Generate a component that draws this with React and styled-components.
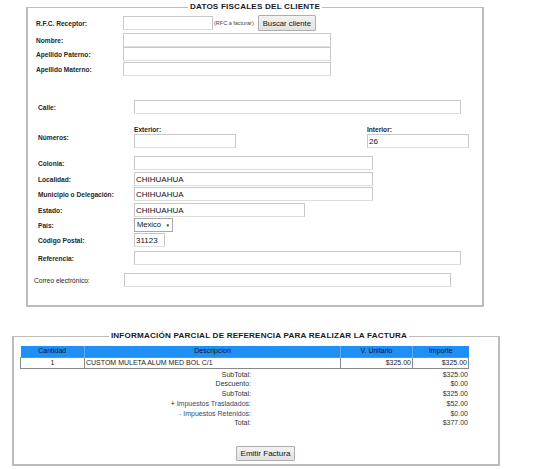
import React from "react";
import styled, { createGlobalStyle } from "styled-components";

const GlobalStyle = createGlobalStyle`
  html, body {
    margin: 0;
    padding: 0;
    background: #ffffff;
  }
  body {
    font-family: "Liberation Sans", Arial, sans-serif;
    color: #222;
  }
  * {
    box-sizing: border-box;
  }
`;

const Page = styled.div`
  padding-top: 1px;
  width: 545px;
`;

const Fieldset = styled.fieldset`
  margin: ${(p) => p.$mt || 0}px 0 0 ${(p) => p.$ml}px;
  width: ${(p) => p.$w}px;
  border: 2px solid #bcbcbc;
  border-top-width: 1px;
  padding: 0 0 ${(p) => p.$pb}px ${(p) => p.$pl || 0}px;
  min-width: 0;
`;

const Legend = styled.legend`
  margin: 0 auto;
  padding: 0 2px;
  font-size: 8.1px;
  line-height: 12px;
  font-weight: bold;
  letter-spacing: 0.2px;
  color: #1a1a1a;
`;

const Row = styled.div`
  display: flex;
  align-items: center;
  margin-top: ${(p) => p.$mt || 0}px;
  padding-left: ${(p) => p.$indent}px;
`;

const Label = styled.label`
  flex: none;
  width: ${(p) => p.$w}px;
  font-size: 6.6px;
  font-weight: ${(p) => (p.$light ? "normal" : "bold")};
  color: #262626;
  white-space: nowrap;
`;

const Input = styled.input`
  display: block;
  width: ${(p) => p.$w}px;
  height: 14px;
  margin: 0;
  padding: 0 1px;
  border: 1px solid #c8c8c8;
  border-bottom-color: #dedede;
  font-family: "Liberation Sans", Arial, sans-serif;
  font-size: 8px;
  color: #111;
  background: #fff;
  outline: none;
`;

const Hint = styled.span`
  margin-left: 1px;
  font-size: 5.5px;
  color: #444;
  white-space: nowrap;
`;

const Button = styled.button`
  height: ${(p) => p.$h || 16}px;
  margin-left: ${(p) => p.$ml || 0}px;
  padding: 0 4px;
  border: 1px solid #adadad;
  border-radius: 1px;
  background: linear-gradient(#f2f2f2, #e2e2e2);
  font-family: "Liberation Sans", Arial, sans-serif;
  font-size: ${(p) => p.$fs || 7.7}px;
  color: #111;
  cursor: pointer;
`;

const NumGroup = styled.div`
  display: flex;
  justify-content: space-between;
  width: 335px;
`;

const NumCol = styled.div`
  display: flex;
  flex-direction: column;
`;

const SubLabel = styled.span`
  font-size: 6.6px;
  line-height: 8px;
  font-weight: bold;
  color: #262626;
`;

const SelectWrap = styled.div`
  position: relative;
  flex: none;
  width: 39px;
  height: 14px;
`;

const Select = styled.select`
  display: block;
  appearance: none;
  -webkit-appearance: none;
  width: 39px;
  height: 14px;
  margin: 0;
  padding: 0 0 0 2px;
  border: 1px solid #a9a9a9;
  border-radius: 0;
  background: #fff;
  font-family: "Liberation Sans", Arial, sans-serif;
  font-size: 7.6px;
  line-height: 12px;
  color: #111;
`;

const Arrow = styled.span`
  position: absolute;
  right: 3px;
  top: 0;
  height: 14px;
  display: flex;
  align-items: center;
  font-size: 4.5px;
  color: #222;
  pointer-events: none;
`;

const Table = styled.table`
  margin: 4px 0 0 0;
  width: 448px;
  border-collapse: collapse;
  table-layout: fixed;
  font-size: 7px;
`;

const Th = styled.th`
  height: 11px;
  padding: 0;
  background: #1e8ff5;
  border-left: 1px solid #63b0fa;
  font-weight: normal;
  color: #141414;
  line-height: 10px;
  &:first-child {
    border-left: none;
  }
`;

const Td = styled.td`
  height: 11px;
  padding: 0 1px;
  border: 1px solid #8a8a8a;
  line-height: 9px;
  color: #1b1b1b;
  text-align: ${(p) => p.$align || "left"};
  white-space: nowrap;
  overflow: hidden;
`;

const Totals = styled.div`
  display: grid;
  grid-template-columns: 231px 217px;
  width: 448px;
  margin-top: 1px;
  font-size: 7px;
  line-height: 9.8px;
`;

const TotalLabel = styled.div`
  text-align: right;
  color: ${(p) => (p.$tax ? "#34486e" : "#333")};
`;

const TotalValue = styled.div`
  text-align: right;
  color: #333;
`;

const Sign = styled.span`
  color: ${(p) => (p.$minus ? "#6a8ab8" : "#111")};
`;

const ButtonRow = styled.div`
  display: flex;
  justify-content: center;
  margin-top: 18px;
  padding-left: 13px;
`;

const totals = [
  { label: "SubTotal:", value: "$325.00" },
  { label: "Descuento:", value: "$0.00" },
  { label: "SubTotal:", value: "$325.00" },
  { label: "Impuestos Trasladados:", value: "$52.00", sign: "+ " },
  { label: "Impuestos Retenidos:", value: "$0.00", sign: "- ", minus: true },
  { label: "Total:", value: "$377.00" },
];

export default function App() {
  return (
    <Page>
      <GlobalStyle />

      {/* datos fiscales */}
      <Fieldset $ml={26} $w={458} $pb={18}>
        <Legend>DATOS FISCALES DEL CLIENTE</Legend>

        <Row $indent={8} $mt={2}>
          <Label $w={87}>R.F.C. Receptor:</Label>
          <Input $w={90} />
          <Hint>(RFC a facturar)</Hint>
          <Button $ml={4}>Buscar cliente</Button>
        </Row>
        <Row $indent={8} $mt={2}>
          <Label $w={87}>Nombre:</Label>
          <Input $w={208} />
        </Row>
        <Row $indent={8}>
          <Label $w={87}>Apellido Paterno:</Label>
          <Input $w={208} />
        </Row>
        <Row $indent={8} $mt={1}>
          <Label $w={87}>Apellido Materno:</Label>
          <Input $w={208} />
        </Row>

        <Row $indent={10} $mt={24}>
          <Label $w={96}>Calle:</Label>
          <Input $w={327} />
        </Row>
        <Row $indent={10} $mt={12}>
          <Label $w={96}>Números:</Label>
          <NumGroup>
            <NumCol>
              <SubLabel>Exterior:</SubLabel>
              <Input $w={102} />
            </NumCol>
            <NumCol>
              <SubLabel>Interior:</SubLabel>
              <Input $w={102} defaultValue="26" />
            </NumCol>
          </NumGroup>
        </Row>
        <Row $indent={10} $mt={8}>
          <Label $w={96}>Colonia:</Label>
          <Input $w={239} />
        </Row>
        <Row $indent={10} $mt={2}>
          <Label $w={96}>Localidad:</Label>
          <Input $w={239} defaultValue="CHIHUAHUA" />
        </Row>
        <Row $indent={10} $mt={1}>
          <Label $w={96}>Municipio o Delegación:</Label>
          <Input $w={239} defaultValue="CHIHUAHUA" />
        </Row>
        <Row $indent={10} $mt={2}>
          <Label $w={96}>Estado:</Label>
          <Input $w={171} defaultValue="CHIHUAHUA" />
        </Row>
        <Row $indent={10} $mt={1}>
          <Label $w={96}>País:</Label>
          <SelectWrap>
            <Select defaultValue="MX">
              <option value="MX">Mexico</option>
            </Select>
            <Arrow>▼</Arrow>
          </SelectWrap>
        </Row>
        <Row $indent={10} $mt={1}>
          <Label $w={96}>Código Postal:</Label>
          <Input $w={31} defaultValue="31123" />
        </Row>
        <Row $indent={10} $mt={4}>
          <Label $w={96}>Referencia:</Label>
          <Input $w={327} />
        </Row>
        <Row $indent={6} $mt={8}>
          <Label $w={90} $light>
            Correo electrónico:
          </Label>
          <Input $w={327} />
        </Row>
      </Fieldset>

      {/* resumen de la factura */}
      <Fieldset $ml={12} $w={488} $mt={23} $pb={3} $pl={6}>
        <Legend>INFORMACIÓN PARCIAL DE REFERENCIA PARA REALIZAR LA FACTURA</Legend>

        <Table>
          <colgroup>
            <col style={{ width: 64 }} />
            <col style={{ width: 256 }} />
            <col style={{ width: 72 }} />
            <col style={{ width: 56 }} />
          </colgroup>
          <thead>
            <tr>
              <Th>Cantidad</Th>
              <Th>Descripcion</Th>
              <Th>V. Unitario</Th>
              <Th>Importe</Th>
            </tr>
          </thead>
          <tbody>
            <tr>
              <Td $align="center">1</Td>
              <Td>CUSTOM MULETA ALUM MED BOL C/1</Td>
              <Td $align="right">$325.00</Td>
              <Td $align="right">$325.00</Td>
            </tr>
          </tbody>
        </Table>

        <Totals>
          {totals.map((t, i) => (
            <React.Fragment key={i}>
              <TotalLabel $tax={!!t.sign}>
                {t.sign && <Sign $minus={t.minus}>{t.sign}</Sign>}
                {t.label}
              </TotalLabel>
              <TotalValue>{t.value}</TotalValue>
            </React.Fragment>
          ))}
        </Totals>

        <ButtonRow>
          <Button $h={15} $fs={8}>Emitir Factura</Button>
        </ButtonRow>
      </Fieldset>
    </Page>
  );
}
